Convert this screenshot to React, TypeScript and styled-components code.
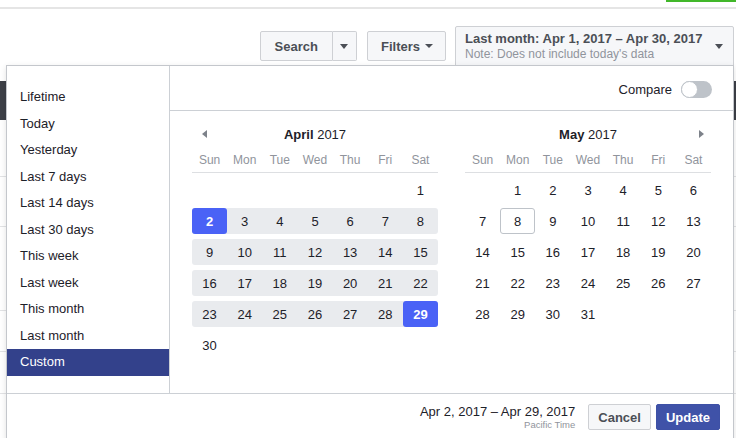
import React from "react";
import styled, { createGlobalStyle, css } from "styled-components";

const FONT = `"Liberation Sans", Arial, Helvetica, sans-serif`;

const Global = createGlobalStyle`
  html, body { margin: 0; padding: 0; background: #fff; }
  body { font-family: ${FONT}; color: #1d2129; }
  * { box-sizing: border-box; }
`;

const Page = styled.div`
  position: relative;
  width: 736px;
  height: 438px;
  overflow: hidden;
  background: #fff;
`;

const TopStrip = styled.div`
  height: 9px;
  border-bottom: 2px solid #e5e5e5;
  display: flex;
  justify-content: flex-end;
  align-items: flex-start;
`;

const GreenMark = styled.div`
  width: 70px;
  height: 2px;
  background: #42b72a;
`;

const Toolbar = styled.div`
  height: 57px;
  display: flex;
  justify-content: flex-end;
  align-items: flex-start;
  padding: 17px 2px 0 0;
`;

const ButtonGroup = styled.div`
  display: flex;
  margin-top: 5px;
  margin-right: 10px;
`;

const ToolButton = styled.button<{ $part?: "left" | "right" }>`
  height: 30px;
  padding: 0 14px;
  display: inline-flex;
  align-items: center;
  gap: 5px;
  border: 1px solid #ced0d4;
  background: #f6f7f9;
  color: #4b4f56;
  font: bold 13px ${FONT};
  border-radius: 2px;
  cursor: pointer;
  ${(p) =>
    p.$part === "left" &&
    css`
      border-radius: 2px 0 0 2px;
    `}
  ${(p) =>
    p.$part === "right" &&
    css`
      border-left: none;
      border-radius: 0 2px 2px 0;
      width: 24px;
      padding: 0;
      justify-content: center;
    `}
`;

const FilterButton = styled(ToolButton)`
  margin-top: 5px;
  margin-right: 9px;
  padding: 0 12px 0 13px;
`;

const Caret = styled.span<{ $w?: number }>`
  display: inline-block;
  width: 0;
  height: 0;
  border-left: ${(p) => (p.$w ?? 9) / 2}px solid transparent;
  border-right: ${(p) => (p.$w ?? 9) / 2}px solid transparent;
  border-top: ${(p) => ((p.$w ?? 9) >= 9 ? 5 : 4)}px solid #4b4f56;
`;

const DateButton = styled.div`
  width: 279px;
  height: 40px;
  border: 1px solid #ced0d4;
  border-radius: 2px 2px 0 0;
  background: #f6f7f9;
  display: flex;
  align-items: center;
  justify-content: space-between;
  padding: 0 10px 0 9px;
`;

const DateLines = styled.div`
  display: flex;
  flex-direction: column;
`;

const DateMain = styled.div`
  font: bold 13px ${FONT};
  color: #4b4f56;
  line-height: 16px;
`;

const DateNote = styled.div`
  font: 12px ${FONT};
  color: #90949c;
  line-height: 15px;
`;

/* background report table (mostly hidden under dropdown) */
const BgTable = styled.div`
  margin-top: 15px;
`;
const BgHeader = styled.div`
  height: 39px;
  background: #3d4047;
`;
const BgRow = styled.div<{ $h: number }>`
  height: ${(p) => p.$h}px;
  border-bottom: 1px solid #e2e3e5;
`;

/* dropdown */
const Dropdown = styled.div`
  position: absolute;
  left: 6px;
  top: 65px;
  width: 728px;
  height: 390px;
  background: #fff;
  border: 1px solid #c4c7cc;
  box-shadow: 0 2px 6px rgba(0, 0, 0, 0.12);
  display: grid;
  grid-template-columns: 163px 1fr;
  grid-template-rows: 327px 1fr;
`;

const Sidebar = styled.ul`
  list-style: none;
  margin: 0;
  padding: 18px 0 0;
  border-right: 1px solid #ccd0d5;
`;

const PresetItem = styled.li<{ $active?: boolean }>`
  font: 13px ${FONT};
  height: 26.5px;
  line-height: 26.5px;
  padding-left: 13px;
  color: #1d2129;
  ${(p) =>
    p.$active &&
    css`
      background: #33418b;
      color: #fff;
    `}
`;

const Main = styled.div`
  display: flex;
  flex-direction: column;
`;

const CompareBar = styled.div`
  font: 13px ${FONT};
  height: 45px;
  border-bottom: 1px solid #ccd0d5;
  display: flex;
  justify-content: flex-end;
  align-items: center;
  gap: 9px;
  padding: 2px 21px 0 0;
  color: #1d2129;
`;

const Toggle = styled.div`
  width: 31px;
  height: 17px;
  border-radius: 9px;
  background: #bec3c9;
  position: relative;
`;

const Knob = styled.div`
  position: absolute;
  left: 0;
  top: 0;
  width: 17px;
  height: 17px;
  border-radius: 50%;
  background: #fff;
  border: 1px solid #bec3c9;
`;

const Calendars = styled.div`
  display: flex;
  gap: 27px;
  padding: 0 22px 0 22px;
`;

const Month = styled.div`
  width: 246px;
  margin-top: 11px;
`;

const TitleRow = styled.div`
  display: grid;
  grid-template-columns: 35px 1fr 35px;
  height: 24px;
  align-items: center;
`;

const Title = styled.div`
  text-align: center;
  font: 13px ${FONT};
  color: #1d2129;
  b {
    font-weight: bold;
  }
`;

const NavArrow = styled.span<{ $dir: "left" | "right" }>`
  width: 0;
  height: 0;
  border-top: 4px solid transparent;
  border-bottom: 4px solid transparent;
  ${(p) =>
    p.$dir === "left"
      ? css`
          border-right: 5px solid #7d828a;
          justify-self: start;
          margin-left: 10px;
        `
      : css`
          border-left: 5px solid #7d828a;
          justify-self: end;
          margin-right: 7px;
        `}
`;

const WeekdayRow = styled.div`
  font: 12px ${FONT};
  margin-top: 2px;
  height: 25px;
  border-bottom: 1px solid #dddfe2;
  display: grid;
  grid-template-columns: repeat(7, 1fr);
  align-items: center;
  color: #90949c;
  text-align: center;
  padding-bottom: 1px;
`;

const Weeks = styled.div`
  margin-top: 4px;
  display: flex;
  flex-direction: column;
  gap: 5px;
`;

const Week = styled.div<{ $inRange?: boolean }>`
  height: 26px;
  display: grid;
  grid-template-columns: repeat(7, 1fr);
  border-radius: 3px;
  background: ${(p) => (p.$inRange ? "#e9ebee" : "transparent")};
`;

const Day = styled.div<{ $selected?: boolean; $today?: boolean }>`
  font: 13px ${FONT};
  display: flex;
  align-items: center;
  justify-content: center;
  color: #1d2129;
  border-radius: 3px;
  ${(p) =>
    p.$selected &&
    css`
      background: #4a62f6;
      color: #fff;
      font-weight: bold;
    `}
  ${(p) =>
    p.$today &&
    css`
      border: 1px solid #bec3c9;
    `}
`;

const Footer = styled.div`
  grid-column: 1 / span 2;
  border-top: 1px solid #ccd0d5;
  display: flex;
  justify-content: flex-end;
  align-items: flex-start;
  padding: 10px 13px 0 0;
`;

const Summary = styled.div`
  display: flex;
  flex-direction: column;
  align-items: flex-end;
  margin-right: 8px;
`;

const SummaryRange = styled.div`
  font: 13px ${FONT};
  line-height: 15px;
  color: #1d2129;
`;

const SummaryZone = styled.div`
  font: 9.5px ${FONT};
  line-height: 11px;
  color: #90949c;
`;

const FooterButton = styled.button<{ $primary?: boolean }>`
  height: 26px;
  padding: 0 9px;
  margin-left: 5px;
  border: 1px solid ${(p) => (p.$primary ? "#3e51a6" : "#ced0d4")};
  background: ${(p) => (p.$primary ? "#3f52a8" : "#f6f7f9")};
  color: ${(p) => (p.$primary ? "#fff" : "#4b4f56")};
  font: bold 13px ${FONT};
  border-radius: 2px;
  cursor: pointer;
`;

const PRESETS = [
  "Lifetime",
  "Today",
  "Yesterday",
  "Last 7 days",
  "Last 14 days",
  "Last 30 days",
  "This week",
  "Last week",
  "This month",
  "Last month",
  "Custom",
];

const WEEKDAYS = ["Sun", "Mon", "Tue", "Wed", "Thu", "Fri", "Sat"];

type Cell = number | null;

function buildWeeks(startDow: number, days: number): Cell[][] {
  const cells: Cell[] = [];
  for (let i = 0; i < startDow; i++) cells.push(null);
  for (let d = 1; d <= days; d++) cells.push(d);
  const weeks: Cell[][] = [];
  for (let i = 0; i < cells.length; i += 7) {
    const w = cells.slice(i, i + 7);
    while (w.length < 7) w.push(null);
    weeks.push(w);
  }
  return weeks;
}

type MonthProps = {
  name: string;
  year: number;
  startDow: number;
  days: number;
  arrow: "left" | "right";
  range?: [number, number];
  today?: number;
};

function MonthView({ name, year, startDow, days, arrow, range, today }: MonthProps) {
  const weeks = buildWeeks(startDow, days);
  return (
    <Month>
      <TitleRow>
        {arrow === "left" ? <NavArrow $dir="left" /> : <span />}
        <Title>
          <b>{name}</b> {year}
        </Title>
        {arrow === "right" ? <NavArrow $dir="right" /> : <span />}
      </TitleRow>
      <WeekdayRow>
        {WEEKDAYS.map((d) => (
          <span key={d}>{d}</span>
        ))}
      </WeekdayRow>
      <Weeks>
        {weeks.map((w, i) => {
          const inRange =
            !!range && w.some((d) => d !== null && d >= range[0] && d <= range[1]);
          return (
            <Week key={i} $inRange={inRange}>
              {w.map((d, j) => (
                <Day
                  key={j}
                  $selected={!!range && d !== null && (d === range[0] || d === range[1])}
                  $today={d !== null && d === today}
                >
                  {d ?? ""}
                </Day>
              ))}
            </Week>
          );
        })}
      </Weeks>
    </Month>
  );
}

export default function App() {
  return (
    <Page>
      <Global />
      <TopStrip>
        <GreenMark />
      </TopStrip>
      <Toolbar>
        <ButtonGroup>
          <ToolButton $part="left">Search</ToolButton>
          <ToolButton $part="right">
            <Caret />
          </ToolButton>
        </ButtonGroup>
        <FilterButton>
          Filters <Caret $w={8} />
        </FilterButton>
        <DateButton>
          <DateLines>
            <DateMain>Last month: Apr 1, 2017 – Apr 30, 2017</DateMain>
            <DateNote>Note: Does not include today's data</DateNote>
          </DateLines>
          <Caret />
        </DateButton>
      </Toolbar>
      <BgTable>
        <BgHeader />
        <BgRow $h={57} />
        <BgRow $h={50} />
        <BgRow $h={84} />
        <BgRow $h={41} />
        <BgRow $h={42} />
      </BgTable>

      <Dropdown>
        <Sidebar>
          {PRESETS.map((p) => (
            <PresetItem key={p} $active={p === "Custom"}>
              {p}
            </PresetItem>
          ))}
        </Sidebar>
        <Main>
          <CompareBar>
            Compare
            <Toggle>
              <Knob />
            </Toggle>
          </CompareBar>
          <Calendars>
            <MonthView name="April" year={2017} startDow={6} days={30} arrow="left" range={[2, 29]} />
            <MonthView name="May" year={2017} startDow={1} days={31} arrow="right" today={8} />
          </Calendars>
        </Main>
        <Footer>
          <Summary>
            <SummaryRange>Apr 2, 2017 – Apr 29, 2017</SummaryRange>
            <SummaryZone>Pacific Time</SummaryZone>
          </Summary>
          <FooterButton>Cancel</FooterButton>
          <FooterButton $primary>Update</FooterButton>
        </Footer>
      </Dropdown>
    </Page>
  );
}
